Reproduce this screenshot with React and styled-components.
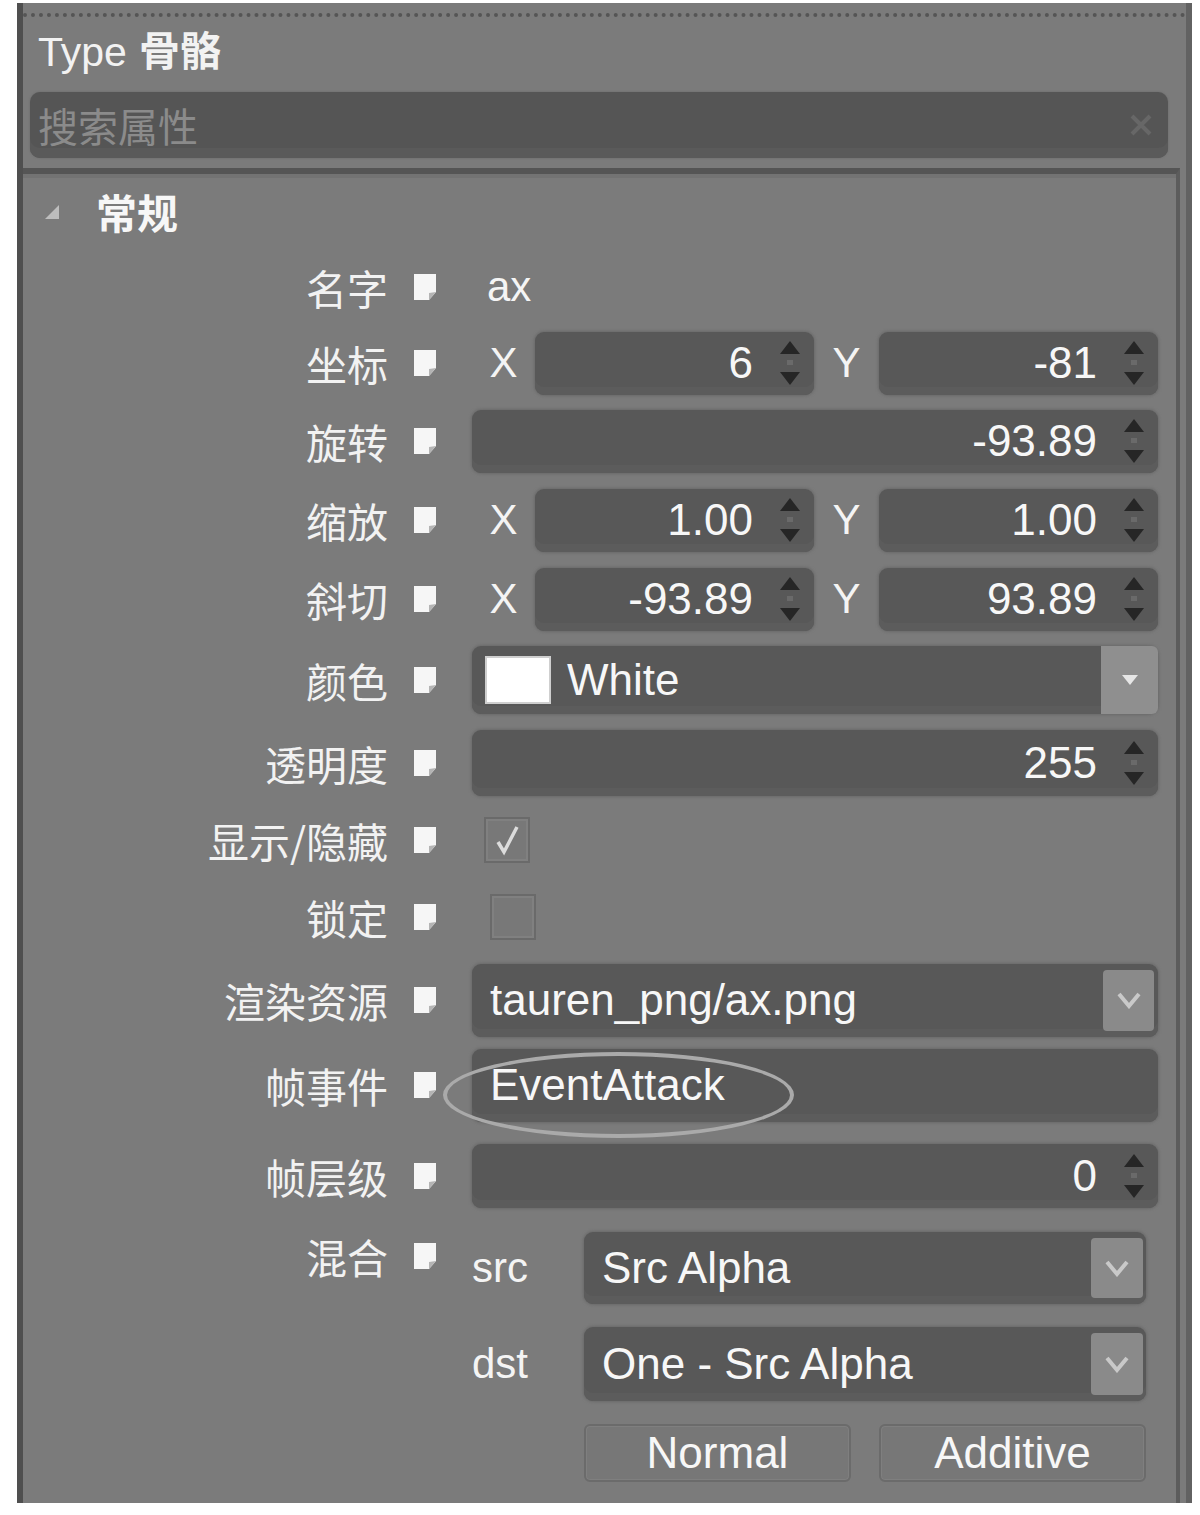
import React from "react";
import styled, { createGlobalStyle } from "styled-components";

const Global = createGlobalStyle`
  html, body { margin: 0; padding: 0; background: #ffffff; }
  body { font-family: "Liberation Sans", "Noto Sans CJK SC", sans-serif; }
`;

const Panel = styled.div`
  box-sizing: border-box;
  margin: 3px 0 0 17px;
  width: 1175px;
  height: 1500px;
  background: #7b7b7b;
  border-left: 6px solid #4f4f4f;
  border-right: 6px solid #626262;
  display: flex;
  flex-direction: column;
  overflow: hidden;
`;

const TopStrip = styled.div`
  height: 10px;
  border-bottom: 4px dotted #555555;
`;

const Header = styled.div`
  height: 62px;
  line-height: 62px;
  padding-left: 15px;
  font-size: 41px;
  color: #f2f2f2;
  white-space: nowrap;
`;

const Bold = styled.span`
  font-weight: bold;
  font-family: "Noto Sans CJK SC", sans-serif;
  margin-left: 12px;
`;

const Search = styled.div`
  margin: 13px 18px 0 7px;
  height: 66px;
  border-radius: 10px;
  background: #555555;
  box-shadow: inset 0 -10px 0 #5a5a5a, 0 0 2px #666;
  display: flex;
  align-items: center;
  padding: 0 14px 0 8px;
`;

const Placeholder = styled.span`
  font-family: "Noto Sans CJK SC", sans-serif;
  font-size: 40px;
  color: #8b8b8b;
  flex: 1;
`;

const Section = styled.div`
  margin: 10px 6px 0 0;
  border-top: 6px solid #555555;
  border-right: 4px solid #5c5c5c;
  box-shadow: inset 0 4px 0 #737373;
  flex: 1;
  display: flex;
  flex-direction: column;
`;

const SectionHead = styled.div`
  height: 75px;
  display: flex;
  align-items: center;
  padding-left: 21px;
  gap: 36px;
`;

const SectionTitle = styled.span`
  font-family: "Noto Sans CJK SC", sans-serif;
  font-weight: bold;
  font-size: 41px;
  color: #f7f7f7;
  line-height: 1;
`;

const Row = styled.div`
  box-sizing: border-box;
  height: ${(p) => p.$h}px;
  display: grid;
  grid-template-columns: 365px 36px 1fr;
  column-gap: 24px;
  align-items: ${(p) => (p.$top ? "start" : "center")};
  padding-top: ${(p) => (p.$top ? 9 : 0)}px;
  padding-right: 18px;
`;

const Label = styled.div`
  text-align: right;
  font-family: "Noto Sans CJK SC", sans-serif;
  font-size: 41px;
  color: #f2f2f2;
  white-space: nowrap;
  line-height: 48px;
`;

const IconCell = styled.div`
  display: flex;
  align-items: center;
  height: 48px;
`;

const Plain = styled.div`
  padding-left: 15px;
  font-size: 42px;
  color: #f5f5f5;
`;

const Field = styled.div`
  position: relative;
  box-sizing: border-box;
  height: ${(p) => p.$h}px;
  background: #585858;
  border-radius: 9px;
  box-shadow: 0 0 3px 1px #6a6a6a, inset 0 -8px 0 #5c5c5c;
  display: flex;
  align-items: center;
  justify-content: ${(p) => (p.$num ? "flex-end" : "flex-start")};
  padding: ${(p) => (p.$num ? "0 13px 0 0" : `0 0 0 ${p.$pl || 18}px`)};
`;

const Value = styled.span`
  font-size: 44px;
  color: #f7f7f7;
  white-space: nowrap;
  line-height: 1;
`;

const SpinWrap = styled.div`
  margin-left: 26px;
  display: flex;
  align-items: center;
`;

const Pair = styled.div`
  display: grid;
  grid-template-columns: 63px 1fr 65px 1fr;
  align-items: center;
`;

const Axis = styled.div`
  text-align: center;
  font-size: 42px;
  color: #f4f4f4;
`;

const Swatch = styled.div`
  width: 62px;
  height: 44px;
  background: #ffffff;
  border: 2px solid #cfcfcf;
  margin-right: 16px;
`;

const DropButton = styled.div`
  align-self: stretch;
  width: ${(p) => p.$w}px;
  margin: ${(p) => p.$m || "0 0 0 auto"};
  background: ${(p) => p.$bg || "#8a8a8a"};
  border-radius: ${(p) => p.$r || "4px"};
  display: flex;
  align-items: center;
  justify-content: center;
`;

const Check = styled.div`
  margin-left: ${(p) => p.$ml}px;
  width: 42px;
  height: 42px;
  border: 2px solid #6a6a6a;
  background: #787878;
  box-shadow: inset 0 0 0 2px #808080;
  display: flex;
  align-items: center;
  justify-content: center;
`;

const Ellipse = styled.div`
  position: absolute;
  left: -29px;
  top: 3px;
  width: 343px;
  height: 78px;
  border: 4px solid #aaaaaa;
  border-radius: 50%;
  pointer-events: none;
`;

const BlendGrid = styled.div`
  display: grid;
  grid-template-columns: 112px 1fr;
  row-gap: 23px;
  align-items: center;
  margin-right: 12px;
`;

const SubLabel = styled.div`
  font-size: 42px;
  color: #f4f4f4;
  line-height: 1;
`;

const Buttons = styled.div`
  display: grid;
  grid-template-columns: 1fr 1fr;
  column-gap: 28px;
`;

const Btn = styled.div`
  box-sizing: border-box;
  height: 58px;
  background: #777777;
  border: 2px solid #6b6b6b;
  border-radius: 6px;
  box-shadow: inset 0 0 0 1px #7f7f7f;
  display: flex;
  align-items: center;
  justify-content: center;
  font-size: 44px;
  color: #f7f7f7;
`;

const PropIcon = () => (
  <svg width="28" height="30" viewBox="0 0 28 30">
    <path d="M2 2H24V20L17 28H2Z" fill="#f6f6f6" />
    <path d="M24 20L17 28V21Z" fill="#b4b4b4" />
  </svg>
);

const Spinner = () => (
  <svg width="22" height="46" viewBox="0 0 22 46">
    <polygon points="11,1 21,14 1,14" fill="#262626" />
    <rect x="8" y="20" width="6" height="5" fill="#6a6a6a" />
    <polygon points="1,32 21,32 11,45" fill="#262626" />
  </svg>
);

const Chevron = () => (
  <svg width="26" height="18" viewBox="0 0 26 18">
    <polyline points="3,3 13,15 23,3" fill="none" stroke="#c9c9c9" strokeWidth="4" />
  </svg>
);

const SolidArrow = () => (
  <svg width="18" height="12" viewBox="0 0 18 12">
    <polygon points="1,1 17,1 9,11" fill="#e6e6e6" />
  </svg>
);

const ClearX = () => (
  <svg width="26" height="26" viewBox="0 0 26 26">
    <path d="M4 4L22 22M22 4L4 22" stroke="#676767" strokeWidth="4" />
  </svg>
);

const Triangle = () => (
  <svg width="16" height="16" viewBox="0 0 16 16">
    <polygon points="15,1 15,15 1,15" fill="#bdbdbd" />
  </svg>
);

const CheckMark = () => (
  <svg width="30" height="32" viewBox="0 0 30 32">
    <polyline points="6,18 12,28 25,3" fill="none" stroke="#dcdcdc" strokeWidth="3.5" />
  </svg>
);

const NumberBox = ({ h, v }) => (
  <Field $h={h} $num>
    <Value>{v}</Value>
    <SpinWrap>
      <Spinner />
    </SpinWrap>
  </Field>
);

const PairRow = ({ h, label, x, y }) => (
  <Row $h={h}>
    <Label>{label}</Label>
    <IconCell><PropIcon /></IconCell>
    <Pair>
      <Axis>X</Axis>
      <NumberBox h={63} v={x} />
      <Axis>Y</Axis>
      <NumberBox h={63} v={y} />
    </Pair>
  </Row>
);

export default function App() {
  return (
    <>
      <Global />
      <Panel>
        <TopStrip />
        <Header>
          Type<Bold>骨骼</Bold>
        </Header>
        <Search>
          <Placeholder>搜索属性</Placeholder>
          <ClearX />
        </Search>
        <Section>
          <SectionHead>
            <Triangle />
            <SectionTitle>常规</SectionTitle>
          </SectionHead>

          <Row $h={76}>
            <Label>名字</Label>
            <IconCell><PropIcon /></IconCell>
            <Plain>ax</Plain>
          </Row>

          <PairRow h={76} label="坐标" x="6" y="-81" />

          <Row $h={80}>
            <Label>旋转</Label>
            <IconCell><PropIcon /></IconCell>
            <NumberBox h={63} v="-93.89" />
          </Row>

          <PairRow h={78} label="缩放" x="1.00" y="1.00" />
          <PairRow h={80} label="斜切" x="-93.89" y="93.89" />

          <Row $h={82}>
            <Label>颜色</Label>
            <IconCell><PropIcon /></IconCell>
            <Field $h={68} $pl={13}>
              <Swatch />
              <Value>White</Value>
              <DropButton $w={57} $bg="#8f8f8f" $r="0 6px 6px 0">
                <SolidArrow />
              </DropButton>
            </Field>
          </Row>

          <Row $h={84}>
            <Label>透明度</Label>
            <IconCell><PropIcon /></IconCell>
            <NumberBox h={66} v="255" />
          </Row>

          <Row $h={70}>
            <Label>显示/隐藏</Label>
            <IconCell><PropIcon /></IconCell>
            <Check $ml={12}>
              <CheckMark />
            </Check>
          </Row>

          <Row $h={84}>
            <Label>锁定</Label>
            <IconCell><PropIcon /></IconCell>
            <Check $ml={18} />
          </Row>

          <Row $h={82}>
            <Label>渲染资源</Label>
            <IconCell><PropIcon /></IconCell>
            <Field $h={73}>
              <Value>tauren_png/ax.png</Value>
              <DropButton $w={51} $m="6px 4px 6px auto">
                <Chevron />
              </DropButton>
            </Field>
          </Row>

          <Row $h={88}>
            <Label>帧事件</Label>
            <IconCell><PropIcon /></IconCell>
            <Field $h={73}>
              <Value>EventAttack</Value>
              <Ellipse />
            </Field>
          </Row>

          <Row $h={94}>
            <Label>帧层级</Label>
            <IconCell><PropIcon /></IconCell>
            <NumberBox h={64} v="0" />
          </Row>

          <Row $h={270} $top>
            <Label>混合</Label>
            <IconCell><PropIcon /></IconCell>
            <BlendGrid>
              <SubLabel>src</SubLabel>
              <Field $h={72}>
                <Value>Src Alpha</Value>
                <DropButton $w={52} $m="6px 3px 6px auto">
                  <Chevron />
                </DropButton>
              </Field>
              <SubLabel>dst</SubLabel>
              <Field $h={74}>
                <Value>One - Src Alpha</Value>
                <DropButton $w={52} $m="6px 3px 6px auto">
                  <Chevron />
                </DropButton>
              </Field>
              <div />
              <Buttons>
                <Btn>Normal</Btn>
                <Btn>Additive</Btn>
              </Buttons>
            </BlendGrid>
          </Row>
        </Section>
      </Panel>
    </>
  );
}
